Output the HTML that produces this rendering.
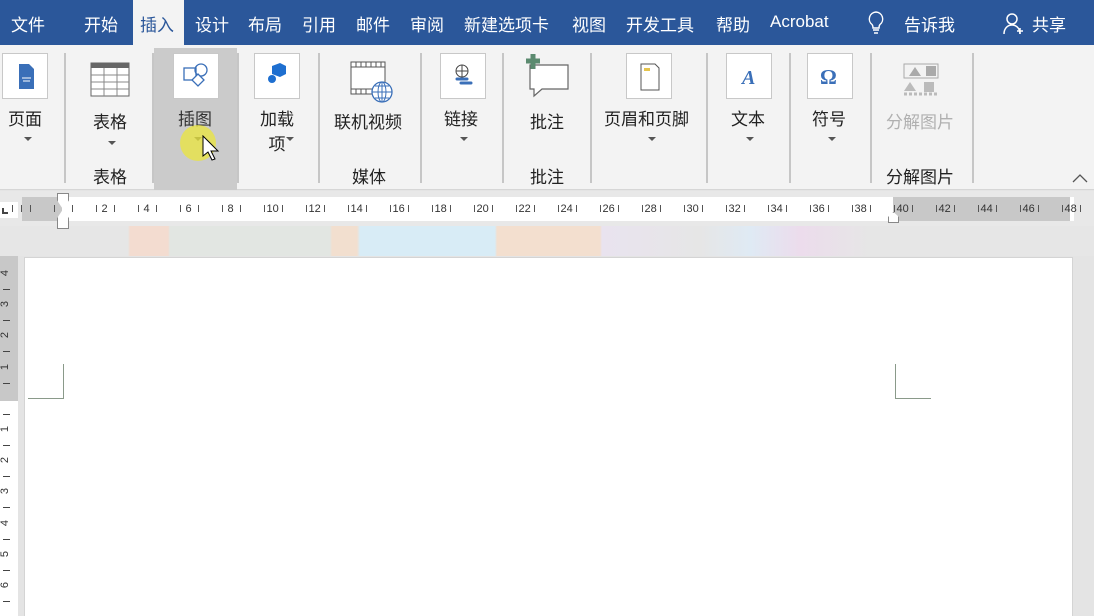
<!DOCTYPE html><html><head><meta charset="utf-8"><style>
*{margin:0;padding:0;box-sizing:border-box}
body{width:1094px;height:616px;overflow:hidden;background:#e4e4e4;font-family:"Liberation Sans","Noto Sans CJK SC",sans-serif;position:relative;color:#222}
.a{position:absolute}
.tabs{left:0;top:0;width:1094px;height:45px;background:#2b579a;color:#fff;font-size:17px}
.tabs span{position:absolute;top:11px;white-space:nowrap}
.rib{left:0;top:45px;width:1094px;height:145px;background:#f3f3f3;border-bottom:1px solid #d6d6d6}
.sep{position:absolute;top:8px;width:2px;height:130px;background:#c6c6c6}
.box{position:absolute;width:46px;height:46px;background:#fff;border:1px solid #c8c8c8;top:8px}
.lb{position:absolute;font-size:17px;white-space:nowrap;text-align:center}
.gl{position:absolute;top:118px;font-size:17px;white-space:nowrap}
.dd{position:absolute;width:0;height:0;border-left:4px solid transparent;border-right:4px solid transparent;border-top:4px solid #555}
.rl{font-size:11px;color:#333;top:203px;position:absolute}
</style></head><body>
<div class="a tabs">
<span style="left:11px">文件</span><span style="left:84px">开始</span>
<div class="a" style="left:133px;top:0;width:51px;height:45px;background:#f3f3f3"></div>
<span style="left:140px;color:#2b579a">插入</span>
<span style="left:195px">设计</span><span style="left:248px">布局</span><span style="left:302px">引用</span><span style="left:356px">邮件</span><span style="left:410px">审阅</span><span style="left:464px">新建选项卡</span><span style="left:572px">视图</span><span style="left:626px">开发工具</span><span style="left:716px">帮助</span><span style="left:770px;top:12px">Acrobat</span>
<svg class="a" style="left:865px;top:10px" width="22" height="26"><path d="M11 2a7 7 0 0 0-4 12.5c1 1 1 2 1 3.5h6c0-1.5 0-2.5 1-3.5A7 7 0 0 0 11 2z" fill="none" stroke="#fff" stroke-width="1.4"/><path d="M8 20h6M9 23h4" stroke="#fff" stroke-width="1.4"/></svg>
<span style="left:904px">告诉我</span>
<svg class="a" style="left:1003px;top:12px" width="20" height="24"><circle cx="9" cy="7" r="5" fill="none" stroke="#fff" stroke-width="1.5"/><path d="M1 22c0-6 4-9 8-9s8 3 8 9" fill="none" stroke="#fff" stroke-width="1.5"/><path d="M14 19h6M17 16v6" stroke="#fff" stroke-width="1.5"/></svg>
<span style="left:1032px">共享</span>
</div>
<div class="a rib">
<div class="a" style="left:154px;top:3px;width:83px;height:142px;background:#cbcbcb"></div>
<div class="sep" style="left:64px"></div><div class="sep" style="left:152px"></div><div class="sep" style="left:237px"></div><div class="sep" style="left:318px"></div><div class="sep" style="left:420px"></div><div class="sep" style="left:502px"></div><div class="sep" style="left:590px"></div><div class="sep" style="left:706px"></div><div class="sep" style="left:789px"></div><div class="sep" style="left:870px"></div><div class="sep" style="left:972px"></div>
<div class="box" style="left:2px"><svg width="46" height="46"><path d="M16 10h10l5 5v20H16z" fill="#3a6fb8"/><path d="M19 24h9M20 27h7" stroke="#fff"/></svg></div>
<svg class="a" style="left:90px;top:17px" width="42" height="38"><rect x="1" y="1" width="38" height="33" fill="#fff" stroke="#666"/><rect x="1" y="1" width="38" height="5" fill="#666"/><path d="M1 13h38M1 20h38M1 27h38M14 6v28M27 6v28" stroke="#888"/></svg>
<div class="box" style="left:173px"><svg width="46" height="46"><rect x="10" y="14" width="12" height="12" fill="none" stroke="#3a6fb8" stroke-width="1.3"/><circle cx="27" cy="16" r="6" fill="none" stroke="#3a6fb8" stroke-width="1.3"/><path d="M24 20l6 6-6 6-6-6z" fill="#fff" stroke="#3a6fb8" stroke-width="1.3"/></svg></div>
<div class="box" style="left:254px"><svg width="46" height="46"><path d="M17 12l8-3 6 3v8l-6 3-8-3z" fill="#1e6fd0"/><circle cx="17" cy="25" r="4" fill="#1e6fd0"/></svg></div>
<svg class="a" style="left:350px;top:16px" width="45" height="44"><rect x="1" y="1" width="34" height="32" fill="#fff" stroke="#555"/><path d="M1 6h34M1 28h34M6 1v5M11 1v5M16 1v5M21 1v5M26 1v5M31 1v5M6 28v5M11 28v5M16 28v5" stroke="#555"/><circle cx="32" cy="31" r="10" fill="#fff" stroke="#3a6fb8" stroke-width="1.3"/><path d="M22 31h20M32 21v20M25 25h14M25 37h14" stroke="#3a6fb8"/><ellipse cx="32" cy="31" rx="4" ry="10" fill="none" stroke="#3a6fb8"/></svg>
<div class="box" style="left:440px"><svg width="46" height="46"><circle cx="21" cy="17" r="6" fill="none" stroke="#444"/><path d="M15 17h12M21 11v12" stroke="#444"/><path d="M16 25h10M20 29h10" stroke="#3a6fb8" stroke-width="3" stroke-linecap="round"/></svg></div>
<svg class="a" style="left:522px;top:8px" width="50" height="48"><path d="M8 12h38v24H20l-8 7v-7H8z" fill="#fff" stroke="#666" stroke-width="1.2"/><path d="M4 8h14M11 1v15" stroke="#5b8a6f" stroke-width="5"/></svg>
<div class="box" style="left:626px"><svg width="46" height="46"><path d="M14 10h14l4 4v22H14z" fill="#fff" stroke="#555"/><rect x="17" y="14" width="6" height="3" fill="#e5c44d"/></svg></div>
<div class="box" style="left:726px"><svg width="46" height="46"><text x="15" y="30" font-size="20" font-style="italic" font-weight="bold" fill="#3a6fb8" font-family="Liberation Serif">A</text></svg></div>
<div class="box" style="left:807px"><svg width="46" height="46"><text x="12" y="30" font-size="21" font-weight="bold" fill="#3a6fb8" font-family="Liberation Serif">Ω</text></svg></div>
<svg class="a" style="left:890px;top:18px" width="52" height="34"><rect x="14" y="1" width="34" height="14" fill="none" stroke="#aaa"/><path d="M19 13l6-9 6 9z" fill="#aaa"/><rect x="36" y="3" width="10" height="10" fill="#aaa"/><path d="M14 28l6-9 6 9zM34 19h10v10H34z" fill="#bbb"/><path d="M14 31h34" stroke="#bbb" stroke-dasharray="3 2" stroke-width="3"/></svg>
<div class="lb" style="left:8px;top:60px">页面</div><div class="dd" style="left:24px;top:92px"></div>
<div class="lb" style="left:93px;top:63px">表格</div><div class="dd" style="left:108px;top:96px"></div>
<div class="lb" style="left:178px;top:60px;color:#333">插图</div><div class="dd" style="left:194px;top:92px"></div>
<div class="lb" style="left:260px;top:60px">加载<br>项</div><div class="dd" style="left:286px;top:92px"></div>
<div class="lb" style="left:334px;top:63px">联机视频</div>
<div class="lb" style="left:444px;top:60px">链接</div><div class="dd" style="left:460px;top:92px"></div>
<div class="lb" style="left:530px;top:63px">批注</div>
<div class="lb" style="left:604px;top:60px">页眉和页脚</div><div class="dd" style="left:648px;top:92px"></div>
<div class="lb" style="left:731px;top:60px">文本</div><div class="dd" style="left:746px;top:92px"></div>
<div class="lb" style="left:812px;top:60px">符号</div><div class="dd" style="left:828px;top:92px"></div>
<div class="lb" style="left:886px;top:63px;color:#b0b0b0">分解图片</div>
<div class="gl" style="left:93px">表格</div><div class="gl" style="left:352px">媒体</div><div class="gl" style="left:530px">批注</div><div class="gl" style="left:886px">分解图片</div>
<svg class="a" style="left:1070px;top:127px" width="20" height="12"><path d="M3 10l7-7 7 7" fill="none" stroke="#555" stroke-width="1.3"/></svg>
<div class="a" style="left:180px;top:80px;width:36px;height:36px;border-radius:50%;background:rgba(235,230,60,.75)"></div>
<svg class="a" style="left:201px;top:90px" width="22" height="28"><path d="M2 1v20l5-4 4 8 3-1-4-8h7z" fill="#fff" stroke="#000" stroke-width="1"/></svg>
</div>
<div class="a" style="left:0;top:191px;width:1094px;height:35px;background:#e8e8e8"></div>
<div class="a" style="left:0;top:202px;width:18px;height:16px;background:#fff"></div>
<div class="a" style="left:2px;top:208px;width:6px;height:6px;border-left:2px solid #444;border-bottom:2px solid #444"></div>
<div class="a" style="left:22px;top:197px;width:1052px;height:24px;background:#fff"></div>
<div class="a" style="left:22px;top:197px;width:40px;height:24px;background:#c8c8c8"></div>
<div class="a" style="left:893px;top:197px;width:177px;height:24px;background:#c8c8c8"></div>
<div class="a" style="left:0;top:226px;width:1094px;height:30px;background:linear-gradient(90deg,#e6e6e6 0,#e6e6e6 128px,#f3dcd0 130px,#f3dcd0 168px,#e2e6e2 170px,#e2e6e2 330px,#f2dfcf 332px,#f2dfcf 357px,#d8ecf6 360px,#d8ecf6 495px,#f3dfcf 497px,#f3dfcf 600px,#e9e3ef 602px,#e6e6e6 700px,#dfeaf4 750px,#ecdcec 800px,#e6e6e6 870px)"></div>
<div class="a" style="left:0;top:256px;width:18px;height:360px;background:#fff"></div>
<div class="a" style="left:0;top:256px;width:18px;height:145px;background:#c8c8c8"></div>
<div class="a" style="left:24px;top:257px;width:1049px;height:359px;background:#fff;border-left:1px solid #d4d4d4;border-top:1px solid #d4d4d4;border-right:1px solid #d4d4d4"></div>
<div class="a" style="left:28px;top:364px;width:36px;height:35px;border-right:1px solid #8a9a8a;border-bottom:1px solid #8a9a8a"></div>
<div class="a" style="left:895px;top:364px;width:36px;height:35px;border-left:1px solid #8a9a8a;border-bottom:1px solid #8a9a8a"></div>
<div id="rul"></div>
<div class="a" style="left:57px;top:193px;width:12px;height:36px;border:1px solid #888;background:#fff;clip-path:polygon(0 0,100% 0,100% 20%,50% 45%,100% 70%,100% 100%,0 100%,0 70%,50% 45%,0 20%)"></div>
<div class="a" style="left:888px;top:212px;width:11px;height:11px;background:#fff;border:1px solid #888;clip-path:polygon(50% 0,100% 45%,100% 100%,0 100%,0 45%)"></div>
<script>
var h='';for(var i=-2;i<=48;i+=2){var x=62.5+i*21;if(i>0)h+='<div class="rl" style="left:'+(x-(i>9?6:3))+'px">'+i+'</div>';
else if(i<0)h+='<div class="a" style="left:'+x+'px;top:205px;width:1px;height:7px;background:#555"></div>';
h+='<div class="a" style="left:'+(x-9)+'px;top:205px;width:1px;height:7px;background:#555"></div><div class="a" style="left:'+(x+9)+'px;top:205px;width:1px;height:7px;background:#555"></div>';}
var v=['4','3','2','1','','1','2','3','4','5','6'];for(var j=0;j<v.length;j++){var y=274+j*31.2;if(v[j])h+='<div class="a" style="left:2px;top:'+(y-7)+'px;font-size:11px;transform:rotate(-90deg);color:#333">'+v[j]+'</div>';h+='<div class="a" style="left:3px;top:'+(y+15)+'px;width:7px;height:1px;background:#444"></div>';}
document.getElementById('rul').innerHTML=h;
</script>
</body></html>
